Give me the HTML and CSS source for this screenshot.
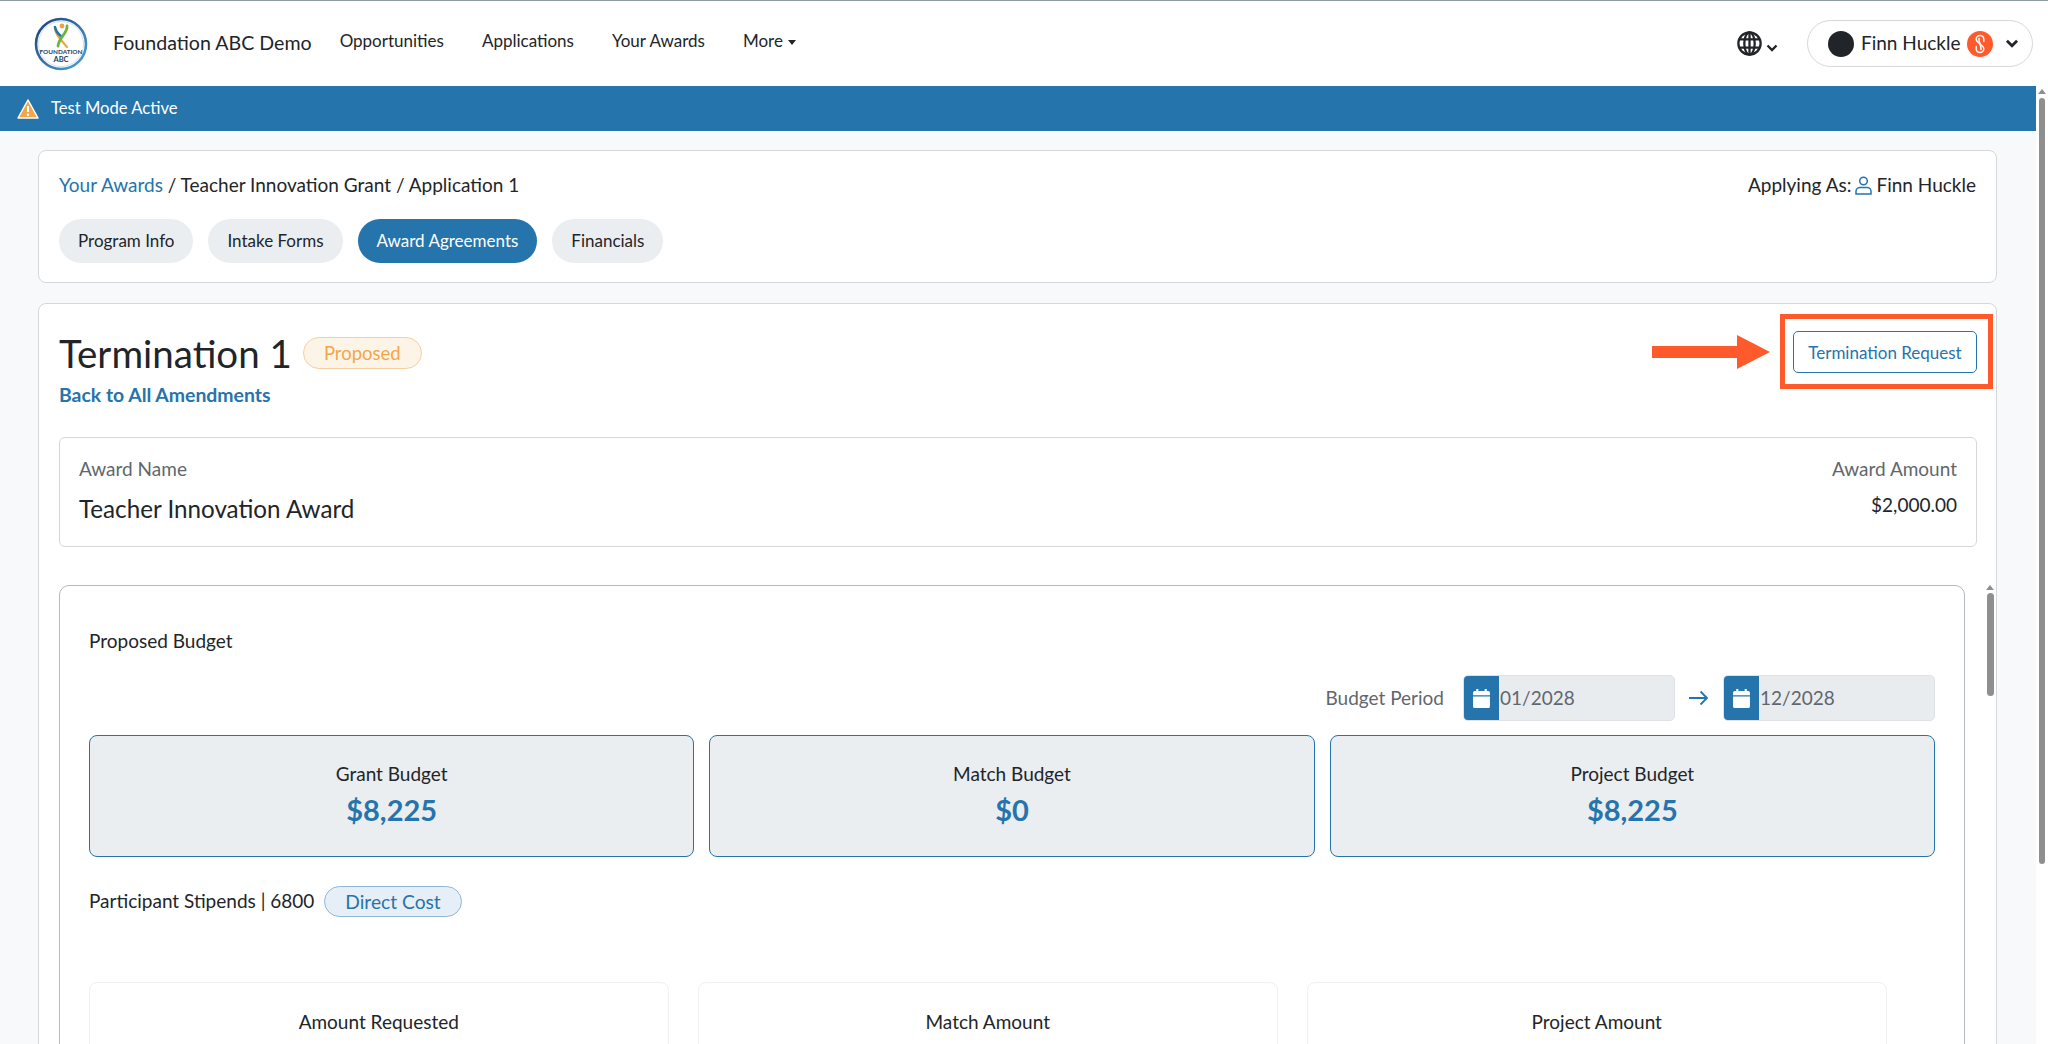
FILE: index.html
```html
<!DOCTYPE html>
<html lang="en">
<head>
    <meta charset="UTF-8">
    <meta name="viewport" content="width=device-width, initial-scale=1.0">
    <title>Termination 1</title>
    <link rel="stylesheet" href="styles.css">
</head>
<body>
    <header class="navbar">
        <svg class="logo" viewBox="0 0 54 54" aria-label="Foundation ABC logo">
            <defs>
                <linearGradient id="ring" x1="0" y1="0" x2="1" y2="1">
                    <stop offset="0" stop-color="#1d3f7a"/>
                    <stop offset="1" stop-color="#4fa3d8"/>
                </linearGradient>
            </defs>
            <circle cx="27" cy="27" r="25" fill="#fff" stroke="url(#ring)" stroke-width="2.6"/>
            <circle cx="27" cy="27" r="22.5" fill="none" stroke="#cfe2ef" stroke-width="1"/>
            <circle cx="28" cy="9" r="2.4" fill="#f2a13a"/>
            <path d="M21 11c0 6 6 12 12 19" fill="none" stroke="#f2a13a" stroke-width="2.2" stroke-linecap="round"/>
            <path d="M21 10c1 5 3 7 6 9" fill="none" stroke="#2574ab" stroke-width="2.6" stroke-linecap="round"/>
            <path d="M33 9c1 7-8 11-9 20" fill="none" stroke="#6cb33f" stroke-width="2.800" stroke-linecap="round"/>
            <text x="27" y="37" class="logo-text" text-anchor="middle">FOUNDATION</text>
            <text x="27" y="44.500" class="logo-text logo-abc" text-anchor="middle">ABC</text>
        </svg>
        <span class="brand">Foundation ABC Demo</span>
        <nav class="nav-links">
            <a>Opportunities</a>
            <a>Applications</a>
            <a>Your Awards</a>
            <a class="nav-more">More<span class="caret"></span></a>
        </nav>
        <div class="nav-right">
            <div class="lang">
                <svg class="globe" viewBox="0 0 24 24" fill="none" stroke="#212529" stroke-width="2.200">
                    <circle cx="12" cy="12" r="10.700"/>
                    <ellipse cx="12" cy="12" rx="5" ry="10.700"/>
                    <path d="M12 1v22M2 8h20M2 16h20"/>
                </svg>
                <svg class="chev chev-small" viewBox="0 0 12 8" fill="none" stroke="#212529" stroke-width="2.400"><path d="M1.500 1.500 6 6l4.500-4.500"/></svg>
            </div>
            <div class="user-pill">
                <span class="avatar"></span>
                <span class="user-name">Finn Huckle</span>
                <svg class="user-badge" viewBox="0 0 26 26">
                    <circle cx="13" cy="13" r="13" fill="#ff5a2b"/>
                    <path d="M16.800 10.500V8.300a3.800 3.800 0 0 0-7.600 0C9.200 12 16.800 14 16.800 17.700a3.800 3.800 0 0 1-7.600 0v-2.200" fill="none" stroke="#fff" stroke-width="1.500" stroke-linecap="round"/>
                    <path d="M12 7.500c-.4 4 2.400 7 2 11" fill="none" stroke="#fff" stroke-width="1.500" stroke-linecap="round"/>
                </svg>
                <svg class="chev" viewBox="0 0 12 8" fill="none" stroke="#212529" stroke-width="2.400"><path d="M1.500 1.500 6 6l4.500-4.500"/></svg>
            </div>
        </div>
    </header>

    <div class="page">
        <div class="page-main">
            <div class="banner">
                <svg class="warn" viewBox="0 0 22 22">
                    <path d="M11 2 21 20H1z" fill="#f2a64a" stroke="#fff" stroke-width="1.500" stroke-linejoin="round"/>
                    <path d="M11 8v6" stroke="#fff" stroke-width="2"/>
                    <circle cx="11" cy="16.800" r="1.200" fill="#fff"/>
                </svg>
                <span>Test Mode Active</span>
            </div>

            <main class="content">
                <section class="card top-card">
                    <div class="crumb-row">
                        <div><a class="link">Your Awards</a> / Teacher Innovation Grant / Application 1</div>
                        <div class="applying">Applying As:
                            <svg class="person" viewBox="0 0 17 19" fill="none" stroke="#2574ab" stroke-width="1.500">
                                <circle cx="8.500" cy="5" r="3.800"/>
                                <path d="M1 18v-2.500c0-2.500 2-4 4-4h7c2 0 4 1.500 4 4V18z"/>
                            </svg>
                            Finn Huckle</div>
                    </div>
                    <div class="tabs">
                        <a class="tab">Program Info</a>
                        <a class="tab">Intake Forms</a>
                        <a class="tab active">Award Agreements</a>
                        <a class="tab">Financials</a>
                    </div>
                </section>

                <section class="card detail-card">
                    <div class="title-row">
                        <div>
                            <div class="title-line">
                                <h1>Termination 1</h1>
                                <span class="badge-proposed">Proposed</span>
                            </div>
                            <a class="back-link">Back to All Amendments</a>
                        </div>
                        <button class="btn-outline" type="button">Termination Request</button>
                    </div>

                    <div class="award-box">
                        <div>
                            <div class="muted">Award Name</div>
                            <div class="award-name">Teacher Innovation Award</div>
                        </div>
                        <div class="award-right">
                            <div class="muted">Award Amount</div>
                            <div class="award-amount">$2,000.00</div>
                        </div>
                    </div>

                    <div class="budget-wrap">
                        <div class="budget-panel">
                            <div class="panel-title">Proposed Budget</div>
                            <div class="period-row">
                                <span class="period-label">Budget Period</span>
                                <div class="date-input">
                                    <span class="date-icon"><svg viewBox="0 0 16 18" fill="#fff"><path d="M3 0h2v2h6V0h2v2h1.500A1.500 1.500 0 0 1 16 3.500V6H0V3.500A1.500 1.500 0 0 1 1.500 2H3zM0 7h16v9.500a1.500 1.500 0 0 1-1.500 1.500h-13A1.500 1.500 0 0 1 0 16.500z"/></svg></span>
                                    <span class="date-value">01/2028</span>
                                </div>
                                <svg class="period-arrow" viewBox="0 0 20 16" fill="none" stroke="#2574ab" stroke-width="1.800"><path d="M0 8h18M11.500 1.500 18 8l-6.500 6.500"/></svg>
                                <div class="date-input">
                                    <span class="date-icon"><svg viewBox="0 0 16 18" fill="#fff"><path d="M3 0h2v2h6V0h2v2h1.500A1.500 1.500 0 0 1 16 3.500V6H0V3.500A1.500 1.500 0 0 1 1.500 2H3zM0 7h16v9.500a1.500 1.500 0 0 1-1.500 1.500h-13A1.500 1.500 0 0 1 0 16.500z"/></svg></span>
                                    <span class="date-value">12/2028</span>
                                </div>
                            </div>
                            <div class="budget-cards">
                                <div class="budget-card"><div>Grant Budget</div><strong>$8,225</strong></div>
                                <div class="budget-card"><div>Match Budget</div><strong>$0</strong></div>
                                <div class="budget-card"><div>Project Budget</div><strong>$8,225</strong></div>
                            </div>
                            <div class="line-item">
                                <span>Participant Stipends | 6800</span>
                                <span class="badge-direct">Direct Cost</span>
                            </div>
                            <div class="amount-cards">
                                <div class="amount-card">Amount Requested</div>
                                <div class="amount-card">Match Amount</div>
                                <div class="amount-card">Project Amount</div>
                            </div>
                        </div>
                        <div class="inner-scroll">
                            <span class="scroll-up"></span>
                            <span class="inner-thumb"></span>
                        </div>
                    </div>
                </section>
            </main>
        </div>
        <div class="page-scroll">
            <span class="scroll-up"></span>
            <span class="page-thumb"></span>
        </div>
    </div>

    <!-- annotation drawn over the screenshot -->
    <svg class="note-arrow" viewBox="0 0 118 34"><path d="M0 11h85V0l33 17-33 17V23H0z" fill="#ff5a2b"/></svg>
    <div class="note-box"></div>
</body>
</html>
```

FILE: styles.css
```css
:root {
    --blue: #2574ab;
    --text: #212529;
    --muted: #5f676d;
    --border: #d5d8da;
    --panel: #ebeef0;
    --orange: #ff5a2b;
}

* {
    margin: 0;
    padding: 0;
    box-sizing: border-box;
}

body {
    height: 1044px;
    overflow: hidden;
    background-color: #f8f9fa;
    color: var(--text);
    font-family: Lato, 'Liberation Sans', sans-serif;
    font-size: 19px;
    line-height: 1.2;
}

/* top bar */
.navbar {
    height: 86px;
    display: flex;
    align-items: center;
    padding-left: 34px;
    background-color: white;
    border-top: 1px solid #8f9ba3;
}

.logo {
    width: 54px;
    height: 54px;
    margin-right: 25px;
}

.logo-text {
    font-family: Lato, sans-serif;
    font-size: 6.400px;
    font-weight: 700;
    fill: #1d3f66;
}

.logo-abc {
    font-size: 7.500px;
}

.brand {
    font-size: 19.600px;
    margin-right: 28px;
    margin-top: -2px;
}

.nav-links {
    display: flex;
    gap: 38px;
    font-size: 17px;
    margin-top: -4px;
}

.nav-more {
    display: flex;
    align-items: center;
}

.caret {
    margin-left: 5px;
    margin-top: 2px;
    border-top: 5px solid var(--text);
    border-left: 4px solid transparent;
    border-right: 4px solid transparent;
}

.nav-right {
    margin-left: auto;
    margin-right: 15px;
    display: flex;
    align-items: center;
    gap: 29px;
}

.lang {
    display: flex;
    align-items: center;
    gap: 4px;
}

.globe {
    width: 25px;
    height: 25px;
}

.chev {
    width: 14px;
    height: 9px;
}

.chev-small {
    width: 12px;
    height: 8px;
    margin-top: 8px;
}

.user-pill {
    width: 226px;
    height: 47px;
    display: flex;
    align-items: center;
    padding-left: 20px;
    background-color: white;
    border: 1px solid var(--border);
    border-radius: 24px;
}

.avatar {
    width: 26px;
    height: 26px;
    border-radius: 50%;
    background-color: var(--text);
    margin-right: 7px;
}

.user-name {
    font-size: 19px;
    margin-right: 6px;
    margin-top: -1px;
}

.user-badge {
    width: 26px;
    height: 26px;
    margin-right: 12px;
}

/* page below the bar */
.page {
    display: flex;
    height: 958px;
}

.page-main {
    flex: 1;
    min-width: 0;
}

.page-scroll {
    width: 12px;
    background-color: white;
    display: flex;
    flex-direction: column;
    align-items: center;
    padding-top: 3px;
}

.scroll-up {
    border-bottom: 5px solid #8f8f8f;
    border-left: 4px solid transparent;
    border-right: 4px solid transparent;
}

.page-thumb {
    width: 6px;
    height: 766px;
    margin-top: 4px;
    border-radius: 3px;
    background-color: #8f8f8f;
}

.banner {
    height: 45px;
    display: flex;
    align-items: center;
    gap: 12px;
    padding-left: 17px;
    background-color: var(--blue);
    color: white;
    font-size: 16.600px;
}

.warn {
    width: 22px;
    height: 22px;
}

.content {
    padding: 19px 39px 0 38px;
    display: flex;
    flex-direction: column;
    gap: 20px;
}

.card {
    background-color: white;
    border: 1px solid var(--border);
    border-radius: 8px;
    padding: 0 20px;
}

.top-card {
    height: 133px;
    padding-top: 23px;
}

.link {
    color: var(--blue);
}

.crumb-row {
    display: flex;
    justify-content: space-between;
    height: 23px;
}

.applying {
    display: flex;
    align-items: center;
    gap: 4px;
}

.person {
    width: 17px;
    height: 19px;
}

.tabs {
    display: flex;
    gap: 15px;
    margin-top: 22px;
}

.tab {
    height: 44px;
    display: flex;
    align-items: center;
    padding: 0 19px;
    background-color: var(--panel);
    border-radius: 22px;
    font-size: 17px;
}

.tab.active {
    background-color: var(--blue);
    color: white;
}

/* termination card */
.detail-card {
    height: 800px;
    padding-right: 0;
    overflow: hidden;
}

.title-row {
    display: flex;
    justify-content: space-between;
    align-items: flex-start;
    height: 133px;
    padding-top: 26px;
    margin-right: 19px;
}

.title-line {
    display: flex;
    align-items: center;
    gap: 11px;
    height: 46px;
}

h1 {
    font-size: 38.500px;
    font-weight: 400;
}

.badge-proposed {
    height: 32px;
    padding: 0 20px;
    display: flex;
    align-items: center;
    background-color: #fdf4e8;
    color: #f2a64a;
    border: 1px solid #f6cf9f;
    border-radius: 16px;
    font-size: 18.500px;
}

.back-link {
    display: block;
    margin-top: 7px;
    color: var(--blue);
    font-size: 19.400px;
    font-weight: 700;
}

.btn-outline {
    width: 184px;
    height: 42px;
    margin-top: 1px;
    background-color: white;
    color: var(--blue);
    border: 1px solid var(--blue);
    border-radius: 5px;
    font-family: inherit;
    font-size: 17px;
}

.award-box {
    height: 110px;
    display: flex;
    justify-content: space-between;
    padding: 20px 19px 0;
    border: 1px solid var(--border);
    border-radius: 6px;
    margin-right: 19px;
}

.muted {
    color: var(--muted);
}

.award-name {
    font-size: 24.200px;
    margin-top: 13px;
}

.award-right {
    text-align: right;
}

.award-amount {
    margin-top: 13px;
}

.budget-wrap {
    display: flex;
    margin-top: 38px;
}

.budget-panel {
    flex: none;
    width: 1906px;
    height: 600px;
    padding: 44px 29px 0;
    border: 1px solid #b4b9bd;
    border-radius: 10px;
}

.panel-title {
    height: 23px;
}

.period-row {
    display: flex;
    justify-content: flex-end;
    align-items: center;
    margin-top: 22px;
}

.period-label {
    color: var(--muted);
    margin-right: 19px;
}

.date-input {
    width: 212px;
    height: 46px;
    display: flex;
    align-items: center;
    background-color: #e9ecef;
    border: 1px solid #dee2e6;
    border-radius: 5px;
    overflow: hidden;
    color: var(--muted);
}

.date-icon {
    width: 36px;
    height: 46px;
    margin-left: -1px;
    display: flex;
    align-items: center;
    justify-content: center;
    background-color: var(--blue);
}

.date-icon svg {
    width: 17px;
    height: 19px;
}

.date-value {
    margin-left: 1px;
}

.period-arrow {
    width: 20px;
    height: 16px;
    margin: 0 14px;
}

.budget-cards {
    display: grid;
    grid-template-columns: repeat(3, 1fr);
    gap: 15px;
    margin-top: 14px;
}

.budget-card {
    height: 122px;
    padding-top: 27px;
    text-align: center;
    background-color: var(--panel);
    border: 1px solid var(--blue);
    border-radius: 8px;
}

.budget-card strong {
    display: block;
    margin-top: 7px;
    color: var(--blue);
    font-size: 29px;
}

.line-item {
    display: flex;
    align-items: center;
    gap: 10px;
    margin-top: 29px;
}

.badge-direct {
    height: 31px;
    padding: 0 20px;
    display: flex;
    align-items: center;
    background-color: #e6eff7;
    color: var(--blue);
    border: 1px solid #8fb8d6;
    border-radius: 16px;
    font-size: 19.200px;
}

.amount-cards {
    display: flex;
    gap: 29.500px;
    margin-top: 65px;
}

.amount-card {
    width: 579.500px;
    height: 100px;
    padding-top: 28px;
    text-align: center;
    border: 1px solid #eef0f2;
    border-radius: 8px;
}

.inner-scroll {
    flex: none;
    width: 29px;
    display: flex;
    flex-direction: column;
    align-items: flex-end;
    padding-right: 0;
}

.inner-thumb {
    width: 7px;
    height: 103px;
    margin-top: 3px;
    border-radius: 4px;
    background-color: #8f8f8f;
}

/* annotation */
.note-arrow {
    position: absolute;
    left: 1652px;
    top: 335px;
    width: 118px;
    height: 34px;
}

.note-box {
    position: absolute;
    left: 1780px;
    top: 314px;
    width: 213px;
    height: 75px;
    border: 5px solid var(--orange);
}
```
